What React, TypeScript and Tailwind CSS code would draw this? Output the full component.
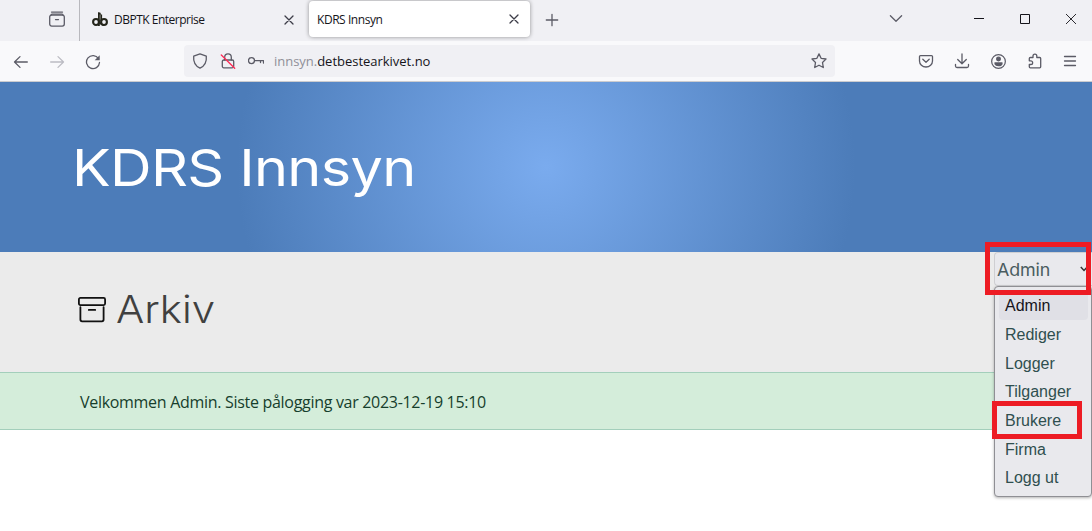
import type { ReactNode } from "react";

function Icon({ className, children }: { className: string; children: ReactNode }) {
  return (
    <svg viewBox="0 0 16 16" fill="none" stroke="currentColor" strokeWidth="1.3" strokeLinecap="round" strokeLinejoin="round" className={`block shrink-0 ${className}`}>
      {children}
    </svg>
  );
}

function CloseIcon({ className }: { className: string }) {
  return (
    <Icon className={className}>
      <path d="M4 4l8 8M12 4l-8 8" />
    </Icon>
  );
}

function TabBar() {
  return (
    <div className="flex h-[41px] bg-[#f0f0f4] text-[#5b5b66]">
      <div className="flex w-[80px] shrink-0 border-r border-[#b8b8bd] pl-[49px] pt-[11px]">
        <Icon className="size-4">
          <path d="M2.5 1.1h11" />
          <rect x="0.7" y="4.1" width="14.6" height="11" rx="2" />
          <path d="M2 4.1c0-.6.5-1 1-1h10c.5 0 1 .4 1 1M6.5 8.6h3" />
        </Icon>
      </div>
      <div className="flex h-[39px] w-[229px] shrink-0 items-center pl-3">
        <svg viewBox="0 0 16 16" className="block size-4 shrink-0" fill="none" stroke="#24251a" strokeWidth="2.1">
          <ellipse cx="4" cy="10" rx="2.9" ry="3" />
          <path d="M6.9 14V1.2c.9 0 1.2.5 1.2 1.3M9.2 2.6V9" strokeWidth="1.8" />
          <ellipse cx="12" cy="10" rx="2.9" ry="3" />
          <path d="M7 8.8c1 2.2 1.3 4.2 5 4.2" strokeWidth="1.3" />
        </svg>
        <span className="ml-1.5 w-[167px] whitespace-nowrap font-['Open_Sans',sans-serif] text-[12px] tracking-[-0.5px] text-[#15141a]">DBPTK Enterprise</span>
        <CloseIcon className="size-4 text-[#3d3d48]" />
      </div>
      <div className="mt-px flex h-9 w-[221px] shrink-0 items-center rounded bg-white pl-2 shadow-[0_0_4px_rgba(0,0,0,0.4)]">
        <span className="w-[189px] whitespace-nowrap pt-px font-['Open_Sans',sans-serif] text-[12px] tracking-[-0.45px] text-[#15141a]">KDRS Innsyn</span>
        <CloseIcon className="size-4 text-[#3d3d48]" />
      </div>
      <Icon className="ml-[14px] mt-3 size-4">
        <path d="M8 2.3v11.4M2.3 8h11.4" />
      </Icon>
      <Icon className="ml-[328px] mt-[10px] size-4">
        <path d="M2.4 5.8L8 11.2l5.6-5.4" />
      </Icon>
      <div className="ml-[70px] mt-[14px] flex gap-9 text-[#15141a]">
        <svg viewBox="0 0 10 10" className="block size-[10px]" stroke="currentColor"><path d="M0 4.5h10" /></svg>
        <svg viewBox="0 0 10 10" className="block size-[10px]" stroke="currentColor" fill="none"><path d="M.5.5h9v9h-9z" /></svg>
        <svg viewBox="0 0 10 10" className="block size-[10px]" stroke="currentColor" strokeWidth="0.9"><path d="M0 0l10 10M10 0L0 10" /></svg>
      </div>
    </div>
  );
}

function Toolbar() {
  return (
    <div className="flex h-[41px] border-b border-[#cccccf] bg-[#f9f9fb] text-[#5b5b66]">
      <div className="flex w-[184px] shrink-0 gap-5 pl-[13px] pt-[13px]">
        <Icon className="size-4"><path d="M14.3 8H1.5M7 2.6L1.5 8l5.5 5.4" /></Icon>
        <Icon className="size-4 text-[#bcbcc3]"><path d="M1.7 8h12.8M9 2.6L14.5 8 9 13.4" /></Icon>
        <svg viewBox="0 0 16 16" fill="none" stroke="currentColor" strokeWidth="1.3" strokeLinecap="round" className="block size-4">
          <path d="M13.5 4.6A6.5 6.5 0 1 0 14.5 8.5" />
          <path d="M14.7 1.3v5h-5z" fill="currentColor" stroke="none" />
        </svg>
      </div>
      <div className="mt-1 flex h-8 w-[651px] shrink-0 items-center rounded bg-[#f0f0f4] pl-2">
        <Icon className="size-4">
          <path d="M8 .9l6.3 2.2c.5 4.8-1 9.5-6.3 12.1C2.7 12.6 1.2 7.9 1.7 3.1z" />
        </Icon>
        <Icon className="ml-3 size-4">
          <rect x="2.3" y="7" width="11.4" height="7.8" rx="1.5" />
          <path d="M4.7 7V4.2a3.3 3.3 0 0 1 6.6 0V7" />
          <path d="M1.3 2l13.4 13.3" stroke="#ff2a55" />
        </Icon>
        <Icon className="ml-3 size-4">
          <circle cx="3.5" cy="7.6" r="3" />
          <path d="M6.5 7.6h9v2.5M12.5 7.6v2" />
        </Icon>
        <div className="ml-[10px] w-[537px] whitespace-nowrap pt-0.5 font-['Open_Sans',sans-serif] text-[13px] tracking-[-0.02px] text-[#15141a]">
          <span className="text-[#8f8f98]">innsyn.</span>detbestearkivet.no
        </div>
        <Icon className="size-4">
          <path d="M8 .9l2.1 4.4 4.9.7-3.5 3.5.8 5L8 12.2l-4.3 2.3.8-5L1 6l4.900-.7z" />
        </Icon>
      </div>
      <div className="ml-[83px] flex gap-5 pt-[12px]">
        <Icon className="size-4">
          <path d="M2.5 2.6h11c.6 0 1 .4 1 1V8A6.5 6 0 0 1 1.5 8V3.600c0-.6.4-1 1-1zM4.8 6.2L8 9.2l3.2-3" />
        </Icon>
        <Icon className="size-4">
          <path d="M8 .9v9.6M3.7 6.5L8 10.8l4.3-4.3M1.5 11.5v1.5c0 .9.6 1.5 1.5 1.5h10c.9 0 1.5-.6 1.5-1.5v-1.5" />
        </Icon>
        <Icon className="mx-px mt-px size-[15px]">
          <circle cx="8" cy="8" r="7.3" />
          <circle cx="8" cy="5.4" r="2" fill="currentColor" />
          <path d="M4.2 9.5h7.6c0 2-1.7 3-3.8 3s-3.8-1-3.8-3z" fill="currentColor" />
        </Icon>
        <Icon className="size-4">
          <path d="M2.3 6.7V5.6c0-.7.5-1.1 1.1-1.1H6V3a1.9 1.9 0 0 1 3.8 0v1.5h2.9c.6 0 1 .4 1 1v8.3c0 .6-.4 1-1 1H3.3c-.6 0-1-.4-1-1v-2.3h1.5a1.8 1.8 0 0 0 0-3.7H2.3z" />
        </Icon>
        <Icon className="-ml-px size-4">
          <path d="M2.5 3.5h11M2.5 8h11M2.5 12.5h11" />
        </Icon>
      </div>
    </div>
  );
}

const menuItems = ["Admin", "Rediger", "Logger", "Tilganger", "Brukere", "Firma", "Logg ut"];

function AdminMenu() {
  return (
    <div className="absolute left-[994px] top-0 w-[98px]">
      <div className="flex h-[34px] items-center justify-between rounded-l border border-r-0 border-[#cfcfd2] bg-[#e9e9ed] pl-[2px]">
        <span className="inline-block origin-left scale-x-[1.05] pt-[3px] font-['Inter',sans-serif] text-[17px] font-normal tracking-[-0.1px] text-[#4a5c60]">Admin</span>
        <svg viewBox="0 0 8 6" className="mr-1 block h-[6px] w-2" fill="none" stroke="#333" strokeWidth="1.5"><path d="M.8 1L4 4.4 7.2 1" /></svg>
      </div>
      <div className="h-[211px] rounded border border-[#8f8f94] bg-[#e9e9ed] pl-1 pr-[3px] pt-1 shadow-[0_1px_3px_rgba(0,0,0,0.3)]">
        {menuItems.map((item, i) => (
          <div key={item} className={`flex h-[28.65px] items-center whitespace-nowrap pl-1.5 pt-0.5 font-['Liberation_Sans',sans-serif] text-[16px] ${i === 0 ? "rounded-sm bg-[#e0e0e6] text-[#15141a]" : "text-[#2f4f4f]"}`}>
            {item}
          </div>
        ))}
      </div>
      <div className="absolute left-[-9px] top-[-10px] h-[53px] w-[106px] border-[5px] border-[#ed1c24]" />
      <div className="absolute left-[-2px] top-[149px] h-[38px] w-[90px] border-[5px] border-[#ed1c24]" />
    </div>
  );
}

export default function App() {
  return (
    <div className="h-[531px] w-[1092px] overflow-hidden bg-white">
      <TabBar />
      <Toolbar />
      <header className="flex h-[170px] items-center bg-[radial-gradient(circle_at_center,#7aabee_0px,#4c7cb9_309px)] pl-[72px] pt-px">
        <h1 className="origin-left scale-x-[1.13] whitespace-nowrap font-['Inter',sans-serif] text-[51px] font-normal leading-none tracking-[-0.6px] text-white">KDRS Innsyn</h1>
      </header>
      <main className="relative">
        <section className="flex h-[120px] bg-[#ebebeb] pl-[78px]">
          <svg viewBox="0 0 28 26" className="mt-[45px] block h-[26px] w-7" fill="none" stroke="#111" strokeWidth="1.8" strokeLinecap="round">
            <rect x="0.9" y="0.9" width="26.2" height="7.2" rx="1.5" />
            <path d="M2.4 10.2v12.4c0 1 .7 1.7 1.7 1.7h19.8c1 0 1.7-.7 1.7-1.7V10.2M10.8 12.9h6.4" />
          </svg>
          <h2 className="ml-[10px] mt-[37px] origin-left scale-x-[1.09] font-['Inter',sans-serif] text-[38.5px] font-light leading-[40px] text-[#404040]">Arkiv</h2>
        </section>
        <div className="flex h-[58px] items-center border-y border-[#a3cfbb] bg-[#d4edda] pl-[80px] pt-0.5 font-['Open_Sans',sans-serif] text-[16px] tracking-[-0.3px] text-[#163e2c]">
          Velkommen Admin. Siste pålogging var 2023-12-19 15:10
        </div>
        <AdminMenu />
      </main>
    </div>
  );
}
